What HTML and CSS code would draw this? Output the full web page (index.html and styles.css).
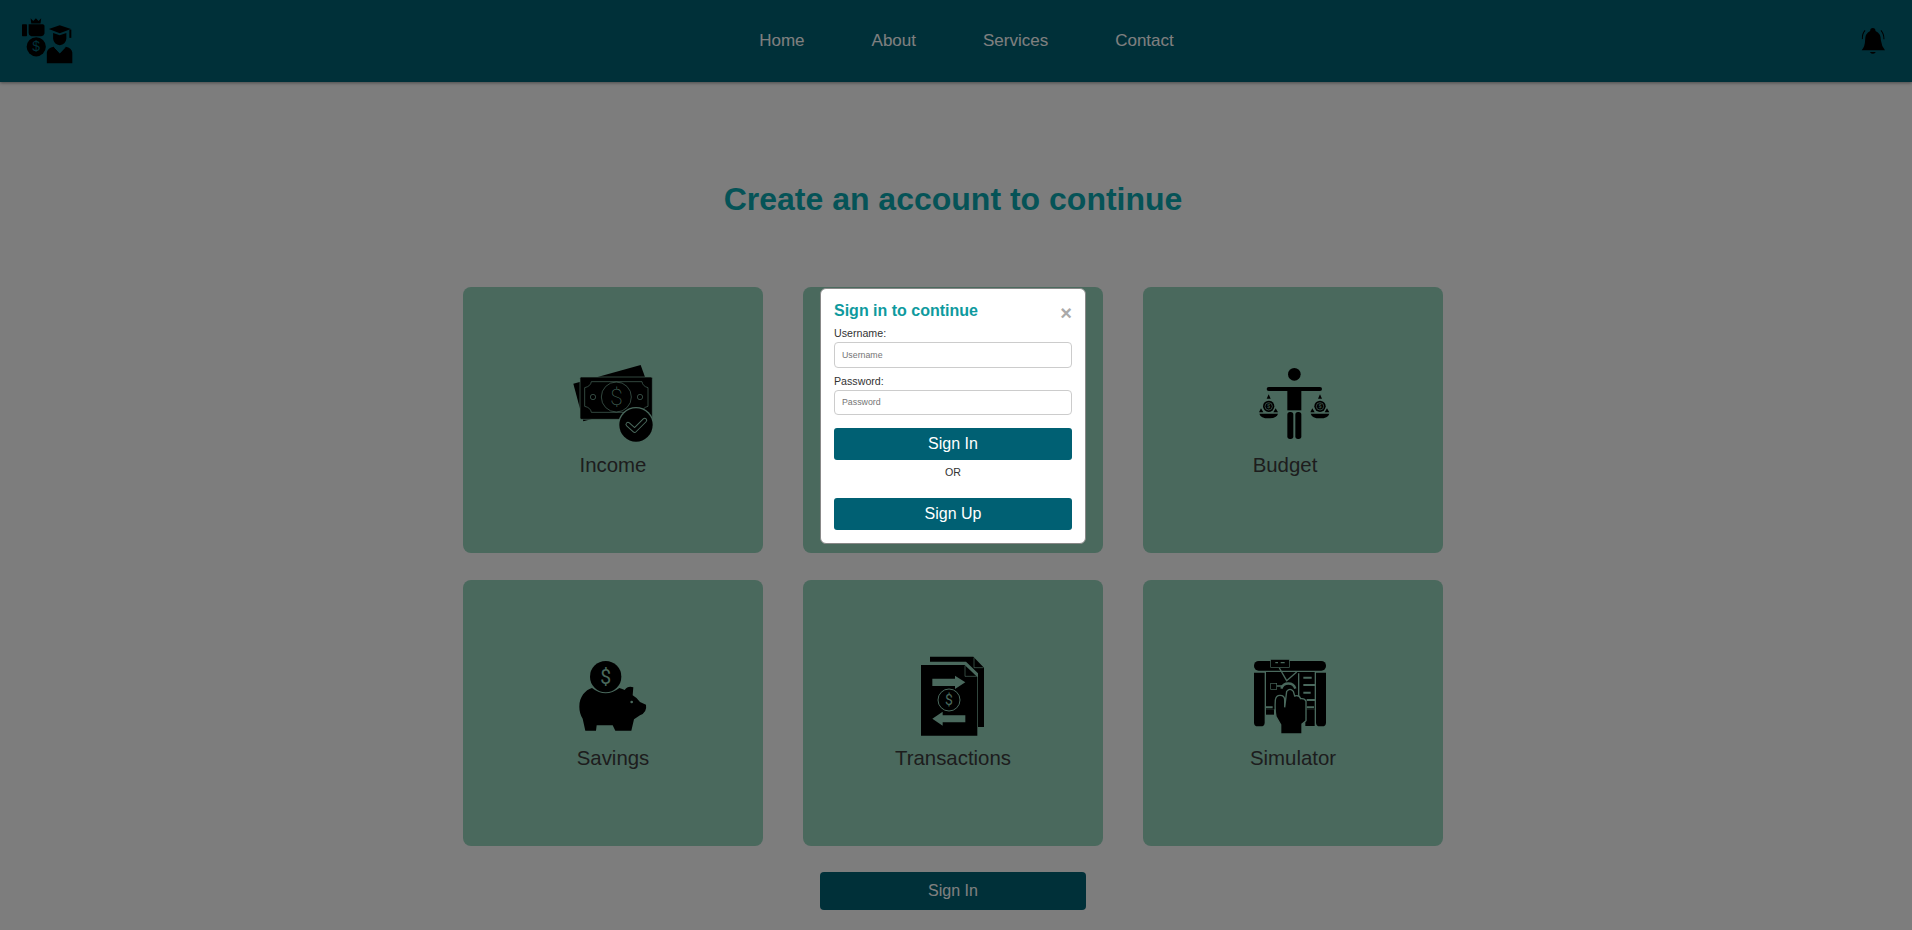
FILE: index.html
```html
<!DOCTYPE html>
<html lang="en">
<head>
  <meta charset="UTF-8" />
  <meta name="viewport" content="width=device-width, initial-scale=1.0"/>
  <title>Finance Simulator</title>
  <link rel="stylesheet" href="styles.css">
</head>
<body>
  <nav class="navbar">
    <svg class="logo" viewBox="60 48 156 142">
      <rect x="64" y="70" width="15" height="36" rx="2"/>
      <path d="M84 70 H128 Q134 72 132 80 V98 Q130 106 122 106 H92 Q84 104 84 96 Z"/>
      <path d="M90 52 L98 60 L106 52 L114 60 L122 52 L120 68 H92 Z"/>
      <circle cx="107" cy="138" r="29"/>
      <text class="logo-dollar" x="107" y="152" text-anchor="middle">$</text>
      <path d="M145 84 L178 73 L212 84 L178 97 Z"/>
      <rect x="207" y="86" width="6" height="25"/>
      <path d="M158 96 L178 103 L198 96 V114 Q196 132 178 133 Q160 132 158 114 Z"/>
      <path d="M139 188 V155 Q141 142 160 138 L178 158 L196 138 Q214 142 216 155 V188 Z"/>
      <path class="collar" d="M162 140 L178 156 L194 140"/>
    </svg>
    <ul class="nav-links">
      <li><a href="#">Home</a></li>
      <li><a href="#">About</a></li>
      <li><a href="#">Services</a></li>
      <li><a href="#">Contact</a></li>
    </ul>
    <svg class="bell" viewBox="60 78 80 80">
      <path d="M98 81 Q106 81 106 90 Q122 97 122 118 Q124 135 134 147 H65 Q75 135 75 118 Q75 97 90 90 Q90 81 98 81 Z"/>
      <path d="M89 152 H107 Q98 163 89 152 Z"/>
      <path class="bell-ring" d="M75 88 Q66 98 67 114 M122 88 Q131 98 131 114"/>
    </svg>
  </nav>

  <main class="page">
    <h1>Create an account to continue</h1>
    <div class="grid">
      <div class="card">
        <svg class="icon" viewBox="69 36 240 240">
          <path d="M70 98 L272 42 L285 78 L140 200 L100 211 Z"/>
          <rect x="90" y="78" width="217" height="127" rx="4" class="bill"/>
          <path class="cut" d="M124 92 H276 Q278 106 294 110 V166 Q278 170 276 184 H124 Q122 170 104 166 V110 Q122 106 124 92 Z"/>
          <circle class="cut" cx="199" cy="138" r="45"/>
          <circle class="cut" cx="129" cy="138" r="8"/>
          <circle class="cut" cx="270" cy="138" r="8"/>
          <text class="dollar" x="199" y="162" font-size="68" text-anchor="middle">$</text>
          <circle class="gap" cx="258" cy="222" r="54"/>
          <circle cx="258" cy="222" r="50"/>
          <path class="cut-wide" d="M234 220 L254 238 L284 208"/>
          <path class="cut-core" d="M234 220 L254 238 L284 208"/>
        </svg>
        <span class="card-label">Income</span>
      </div>
      <div class="card"></div>
      <div class="card">
        <svg class="icon" viewBox="39 36 240 240">
          <circle cx="163" cy="70" r="19"/>
          <rect x="80" y="108" width="166" height="12" rx="6"/>
          <rect x="142" y="108" width="42" height="70"/>
          <rect x="142" y="183" width="18" height="81" rx="8"/>
          <rect x="166" y="183" width="18" height="81" rx="8"/>
          <path d="M86 130 L92 143 H80 Z M240 130 L246 143 H234 Z"/>
          <circle cx="86" cy="166" r="17"/>
          <circle cx="240" cy="166" r="17"/>
          <circle class="cut" cx="86" cy="166" r="11"/>
          <circle class="cut" cx="240" cy="166" r="11"/>
          <text class="dollar heavy" x="86" y="172" font-size="17" text-anchor="middle">$</text>
          <text class="dollar heavy" x="240" y="172" font-size="17" text-anchor="middle">$</text>
          <path d="M63 172 L70 184 H57 Z M107 172 L114 184 H100 Z M217 172 L224 184 H211 Z M261 172 L268 184 H254 Z"/>
          <path d="M58 188 H114 Q110 202 86 202 Q62 202 58 188 Z M212 188 H268 Q264 202 240 202 Q216 202 212 188 Z"/>
        </svg>
        <span class="card-label budget-label">Budget</span>
      </div>
      <div class="card">
        <svg class="icon" viewBox="39 18 240 240">
          <circle cx="137" cy="80" r="47"/>
          <text class="dollar heavy" x="137" y="101" font-size="58" text-anchor="middle">$</text>
          <path d="M58 170 C58 140 76 120 96 114 Q137 146 178 114 C184 116 190 118 194 120 Q204 106 220 112 L218 136 Q232 144 240 156 L258 164 Q262 186 240 196 L222 208 L214 242 H166 L158 226 H110 L108 242 H76 L68 206 Q58 190 58 170 Z"/>
          <circle class="dot" cx="215" cy="156" r="4"/>
        </svg>
        <span class="card-label">Savings</span>
      </div>
      <div class="card">
        <svg class="icon" viewBox="39 33 240 240">
          <path d="M90 35 H220 L252 68 V246 H234 V85 L198 50 H90 Z"/>
          <path class="cut" d="M222 38 V68 H250"/>
          <path d="M63 60 H194 L232 96 V272 H63 Z"/>
          <path class="cut" d="M195 62 V94 H230"/>
          <path class="arrow" d="M97 101 H165 V92 L196 112 L165 132 V123 H97 Z"/>
          <path class="arrow" d="M196 211 H128 V200 L97 221 L128 242 V232 H196 Z"/>
          <circle class="cut thick" cx="147" cy="165" r="33"/>
          <text class="dollar heavy" x="147" y="180" font-size="42" text-anchor="middle">$</text>
        </svg>
        <span class="card-label">Transactions</span>
      </div>
      <div class="card">
        <svg class="icon" viewBox="39 18 240 240">
          <rect x="42" y="33" width="216" height="29" rx="14"/>
          <path d="M42 68 H74 V218 Q74 229 62 229 H54 Q42 229 42 218 Z"/>
          <path d="M228 68 H258 V218 Q258 229 246 229 H240 Q228 229 228 218 Z"/>
          <rect x="78" y="66" width="146" height="112"/>
          <rect x="78" y="178" width="24" height="16"/>
          <rect x="196" y="178" width="28" height="50"/>
          <rect class="tag" x="92" y="28" width="56" height="24"/>
          <path class="cut line" d="M106 38 H114 M122 38 H134"/>
          <path class="cut line" d="M118 54 L140 92 L170 66 M110 108 H126"/>
          <rect class="tag" x="92" y="100" width="18" height="18"/>
          <path class="cut arc" d="M124 116 A22 22 0 0 1 166 116"/>
          <path class="cut line" d="M176 70 V140"/>
          <path class="cut wide" d="M190 83 H215 M190 105 H225 M190 128 H212 M200 150 H225 M200 172 H222 M76 172 H98"/>
          <path class="hand" d="M106 150 Q108 136 120 136 Q134 136 134 150 V172 L140 124 Q150 112 160 124 L164 138 Q178 134 182 146 Q194 144 198 154 V212 L186 222 V252 H122 V224 L108 200 Q104 180 106 150 Z"/>
        </svg>
        <span class="card-label">Simulator</span>
      </div>
    </div>
    <button class="signin-btn">Sign In</button>
  </main>

  <div class="overlay">
    <div class="modal">
      <div class="modal-head">
        <h3>Sign in to continue</h3>
        <span class="close">&times;</span>
      </div>
      <label for="username">Username:</label>
      <input type="text" id="username" placeholder="Username">
      <label for="password">Password:</label>
      <input type="password" id="password" placeholder="Password">
      <button class="modal-btn first">Sign In</button>
      <p class="or">OR</p>
      <button class="modal-btn">Sign Up</button>
    </div>
  </div>
</body>
</html>
```

FILE: styles.css
```css
* {
  box-sizing: border-box;
}
body {
  margin: 0;
  font-family: "Liberation Sans", Arial, sans-serif;
  background-color: #fafafa;
}
.navbar {
  height: 82px;
  padding: 0 25px 0 20px;
  display: flex;
  justify-content: space-between;
  align-items: center;
  background-color: #006073;
  box-shadow: 0 1px 3px rgba(0,0,0,0.4);
}
.logo {
  width: 53px;
  height: 47px;
  margin-bottom: 2px;
}
.collar {
  fill: none;
  stroke: #006073;
  stroke-width: 3;
}
.bell {
  width: 27px;
  height: 27px;
  margin-bottom: 2px;
}
.bell-ring {
  fill: none;
  stroke: #000;
  stroke-width: 3;
}
.logo-dollar {
  font-size: 42px;
  font-family: "Liberation Sans", sans-serif;
  fill: #006073;
}
.nav-links {
  list-style: none;
  display: flex;
  gap: 67px;
  margin: 0;
  padding: 0;
}
.nav-links a {
  color: #fff;
  font-size: 17px;
  text-decoration: none;
}
.page {
  padding: 99px 6px 0 0;
  display: flex;
  flex-direction: column;
  align-items: center;
}
h1 {
  margin: 0 0 69px;
  font-size: 32px;
  line-height: 37px;
  color: #0aa6ae;
}
.grid {
  display: grid;
  grid-template-columns: repeat(3, 300px);
  grid-auto-rows: 266px;
  column-gap: 40px;
  row-gap: 27px;
}
.card {
  display: flex;
  flex-direction: column;
  align-items: center;
  justify-content: center;
  gap: 10px;
  background-color: #94d2ba;
  border-radius: 8px;
}
.icon {
  width: 80px;
  height: 80px;
  overflow: visible;
}
.card-label {
  font-size: 20.4px;
  line-height: 24px;
  color: #3a3a3a;
}
.budget-label {
  padding-right: 16px;
}
.bill {
  stroke: #94d2ba;
  stroke-width: 2;
}
.cut, .cut-wide, .cut-core {
  fill: none;
  stroke: #94d2ba;
  stroke-width: 2;
}
.cut.thick {
  stroke-width: 3;
}
.cut.line {
  stroke-width: 4;
}
.cut.arc {
  stroke-width: 7;
}
.cut.wide {
  stroke-width: 6;
}
.cut-wide {
  stroke-width: 15;
  stroke-linejoin: round;
  stroke-linecap: round;
}
.cut-core {
  stroke: #000;
  stroke-width: 9;
  stroke-linejoin: round;
  stroke-linecap: round;
}
.gap, .dot, .arrow {
  fill: #94d2ba;
}
.tag {
  stroke: #94d2ba;
  stroke-width: 2;
}
.hand {
  stroke: #94d2ba;
  stroke-width: 4;
}
.dollar {
  fill: #94d2ba;
  font-family: Roboto, "Liberation Sans", sans-serif;
  font-weight: 100;
}
.dollar.heavy {
  font-weight: 400;
}
.signin-btn {
  width: 266px;
  height: 38px;
  margin-top: 26px;
  border: none;
  border-radius: 4px;
  background-color: #006073;
  color: #fff;
  font-family: inherit;
  font-size: 16px;
}
.overlay {
  position: fixed;
  top: 0;
  left: 0;
  right: 0;
  bottom: 0;
  padding: 288px 6px 0 0;
  display: flex;
  justify-content: center;
  align-items: flex-start;
  background-color: rgba(0,0,0,0.5);
}
.modal {
  width: 266px;
  height: 256px;
  padding: 11px 13px 13px;
  background: #fff;
  border: 1px solid #888;
  border-radius: 6px;
}
.modal-head {
  display: flex;
  justify-content: space-between;
  align-items: flex-start;
  height: 23px;
}
.modal-head h3 {
  margin: 0;
  font-size: 16px;
  line-height: 22px;
  color: #0e9a9e;
}
.close {
  margin-top: 3px;
  color: #aaa;
  font-size: 20px;
  line-height: 20px;
  font-weight: bold;
}
label {
  display: block;
  font-size: 10.67px;
  line-height: 13px;
  margin-top: 4px;
  color: #333;
}
input {
  display: block;
  width: 100%;
  height: 25.5px;
  margin-top: 2px;
  padding: 0 7px;
  font-family: inherit;
  font-size: 8.8px;
  border: 1px solid #ccc;
  border-radius: 4px;
}
input + label {
  margin-top: 7px;
}
.modal-btn {
  display: block;
  width: 100%;
  height: 32px;
  border: none;
  border-radius: 3px;
  background-color: #006073;
  color: #fff;
  font-family: inherit;
  font-size: 16px;
}
.modal-btn.first {
  margin-top: 13px;
}
.or {
  margin: 0;
  height: 38px;
  padding-top: 6px;
  text-align: center;
  font-size: 10.67px;
  line-height: 13px;
  color: #333;
}
```
